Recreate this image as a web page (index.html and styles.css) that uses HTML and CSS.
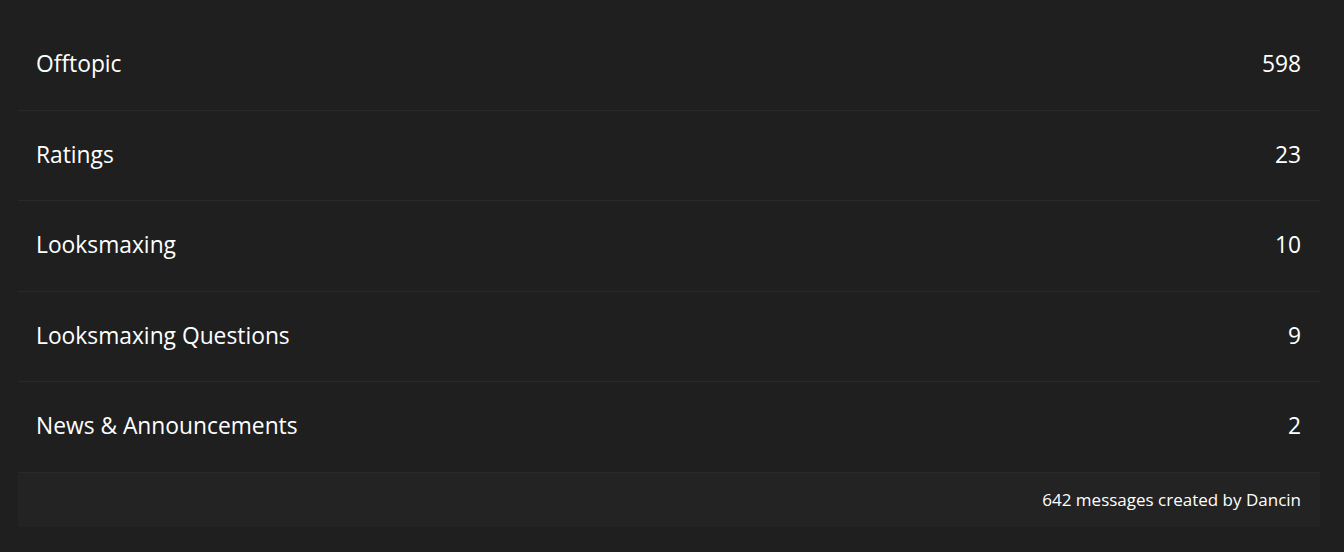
FILE: index.html
```html
<!DOCTYPE html>
<html>
<head>
<meta charset="utf-8">
<link rel="stylesheet" href="styles.css">
</head>
<body>
<div class="panel">
  <div class="row"><span class="name">Offtopic</span><span class="count">598</span></div>
  <div class="row"><span class="name">Ratings</span><span class="count">23</span></div>
  <div class="row"><span class="name">Looksmaxing</span><span class="count">10</span></div>
  <div class="row"><span class="name">Looksmaxing Questions</span><span class="count">9</span></div>
  <div class="row"><span class="name">News &amp; Announcements</span><span class="count">2</span></div>
  <div class="footer">642 messages created by Dancin</div>
</div>
</body>
</html>
```
FILE: styles.css
```css
html, body {
  margin: 0;
  padding: 0;
  background: #1f1f1f;
  color: #ffffff;
  font-family: "Open Sans", "Noto Sans", sans-serif;
}
.panel {
  margin: 20px 24px 0 18px;
  display: flex;
  flex-direction: column;
}
.row {
  height: 89.5px;
  border-bottom: 1px solid #292929;
  display: flex;
  align-items: center;
  justify-content: space-between;
  padding: 0 19px 2px 18px;
  box-sizing: border-box;
  height: 90.5px;
  font-size: 22.8px;
}
.footer {
  height: 54px;
  background: #232323;
  display: flex;
  align-items: center;
  justify-content: flex-end;
  padding: 0 19px;
  font-size: 17px;
}
```
